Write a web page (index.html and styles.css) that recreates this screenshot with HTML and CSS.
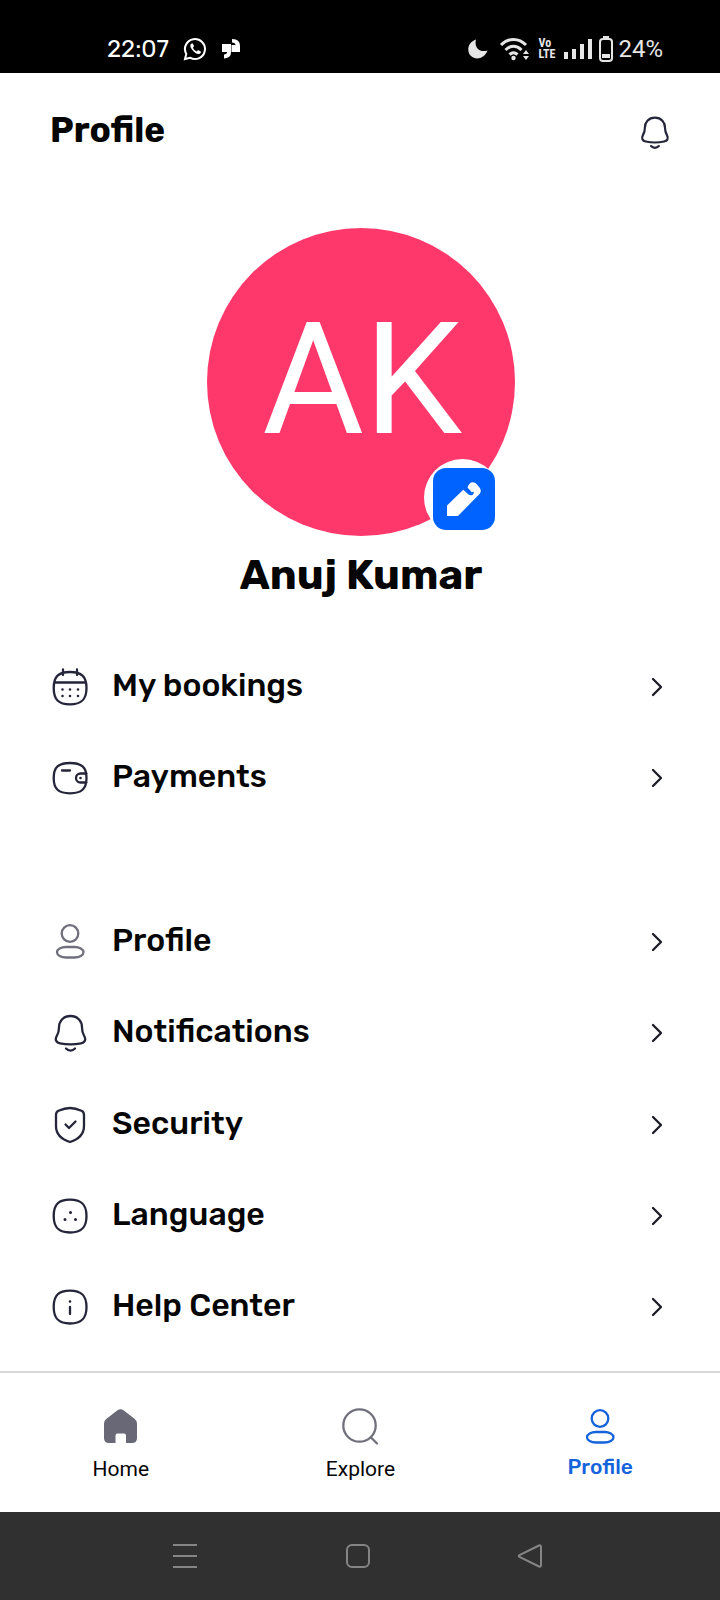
FILE: index.html
```html
<!DOCTYPE html>
<html lang="en">
<head>
<meta charset="utf-8">
<meta name="viewport" content="width=device-width, initial-scale=1">
<title>Profile</title>
<link rel="stylesheet" href="styles.css">
</head>
<body>
<svg class="defs" aria-hidden="true">
  <symbol id="chevron" viewBox="0 0 12 20"><path d="M2 2l8 8-8 8"/></symbol>
  <symbol id="person" viewBox="0 0 40 40"><circle cx="20" cy="11.500" r="8.300"/><rect x="7" y="25" width="26.500" height="10.500" rx="9" ry="5.250"/></symbol>
  <symbol id="bell" viewBox="0 0 40 40"><path d="M20.500 3C13 3 9 8.500 9 14.500c0 4-.5 5.500-2.200 8.500-2.300 4-.3 6.500 3.200 7.300 7 1.500 14 1.500 21 0 3.500-.8 5.500-3.300 3.200-7.300-1.700-3-2.200-4.500-2.200-8.500C32 8.500 28 3 20.500 3z"/><path d="M16 35.500c2.500 2.700 6.500 2.700 9 0"/></symbol>
</svg>
<div class="screen">
  <div class="status">
    <div class="status-group">
      <span class="clock">22:07</span>
      <svg class="s-wa" viewBox="0 0 24 24"><path d="M2 22l1.300-5a10 10 0 1 1 3.700 3.700z" fill="none" stroke="currentColor" stroke-width="2"/><path d="M8.500 6.500c-1.800 1-1.500 3.500.5 6s4.500 4.700 6.800 4.500c1.400-.2 2.400-1.300 2-2.600l-2.700-1.400-1.400 1.500c-1.800-.7-3-2-3.800-3.700l1.100-1.500-1.100-2.700z" fill="currentColor"/></svg>
      <svg class="s-quote" viewBox="0 0 20 22"><path d="M1 6h9v8c0 4-2 6-7 6.500v-4c2 0 3-1 3-2.500H1zM11 1c6 0 8 3 8 7v6h-8.500V7h4c0-1.500-1.500-2.500-3.500-2.500z" fill="currentColor"/></svg>
    </div>
    <div class="status-group status-right">
      <svg class="s-moon" viewBox="0 0 22 22"><path d="M9 1.500C7 9 12 15 20.500 12.500 18 20 9 23 4 18S1 4 9 1.500z" fill="currentColor"/></svg>
      <svg class="s-wifi" viewBox="0 0 32 24"><path d="M2 8c7-7.500 18-7.500 25 0M6.500 13c5-5 11-5 16 0M10.500 17.500c3-2.500 5-2.500 8 0" fill="none" stroke="currentColor" stroke-width="3"/><circle cx="14.500" cy="21" r="2.200" fill="currentColor"/><path d="M24 17l3-4 3 4zM24 19l3 4 3-4z" fill="currentColor"/></svg>
      <span class="volte"><span>Vo</span><span>LTE</span></span>
      <svg class="s-bars" viewBox="0 0 30 22"><path d="M1 14h4v7H1zM9 11h4v10H9zM17 6h4v15h-4zM25 1h4v20h-4z" fill="currentColor"/></svg>
      <svg class="s-batt" viewBox="0 0 16 28"><rect x="2" y="4" width="12" height="22" rx="3" fill="none" stroke="currentColor" stroke-width="2"/><path d="M5 1h6v2H5zM4 19h8v4H4z" fill="currentColor"/></svg>
      <span class="percent">24%</span>
    </div>
  </div>

  <header class="header">
    <h1 class="title">Profile</h1>
    <button class="plain" aria-label="Notifications"><svg class="icon bell-small"><use href="#bell"/></svg></button>
  </header>

  <main class="main">
    <section class="hero">
      <div class="avatar">
        <span class="initials">AK</span>
        <div class="edit-ring"></div>
        <button class="edit" aria-label="Edit picture"><svg viewBox="0 0 36 36"><path d="M1 35V24.500L17.500 8.500l5.500 5 3.500-1.500-5-5.500C23.500 0 28 0 31 3.500l2.500 3c2 2.500 1.500 5-.5 7L12 35z"/><path class="cut" d="M17.500 7.500l5.500 5c2 1.500 4.500.5 3.500-1.500"/></svg></button>
      </div>
      <h2 class="name">Anuj Kumar</h2>
    </section>

    <nav class="menu" aria-label="Bookings">
      <a class="row" href="#"><svg class="icon" viewBox="0 0 40 40"><path d="M3.700 21C3.700 9.500 8.500 5 20 5s16.500 4.500 16.500 16S31.500 37.300 20 37.300 3.700 32.500 3.700 21zM4.500 15.500h31.500M13 2.500v5.500M27 2.500v5.500"/><path class="dots" d="M12.500 22.500h.01M20 22.500h.01M28 22.500h.01M12.500 29h.01M20 29h.01M28 29h.01"/></svg><span class="label">My bookings</span><svg class="chevron"><use href="#chevron"/></svg></a>
      <a class="row" href="#"><svg class="icon" viewBox="0 0 40 40"><path d="M3.700 20C3.700 9 8.500 5 20 5s16.500 4 16.500 15-5 15.300-16.500 15.300S3.700 31 3.700 20zM12 12.500h8M36.500 15.500h-6a4.500 4.500 0 0 0 0 9h6"/><path class="dots" d="M30.500 20h.01"/></svg><span class="label">Payments</span><svg class="chevron"><use href="#chevron"/></svg></a>
    </nav>

    <nav class="menu settings" aria-label="Settings">
      <a class="row" href="#"><svg class="icon muted"><use href="#person"/></svg><span class="label">Profile</span><svg class="chevron"><use href="#chevron"/></svg></a>
      <a class="row" href="#"><svg class="icon"><use href="#bell"/></svg><span class="label">Notifications</span><svg class="chevron"><use href="#chevron"/></svg></a>
      <a class="row" href="#"><svg class="icon" viewBox="0 0 40 40"><path d="M20 3c3.500 0 8 1.200 11.500 2.700 2 .9 2.500 2 2.500 4.300v11c0 8-6 13.500-14 16C12 34.500 6 29 6 21V10c0-2.300.5-3.400 2.500-4.300C12 4.200 16.500 3 20 3zM15.500 19.500l3.500 3.500 6.500-6.500"/></svg><span class="label">Security</span><svg class="chevron"><use href="#chevron"/></svg></a>
      <a class="row" href="#"><svg class="icon" viewBox="0 0 40 40"><path d="M3.700 20C3.700 8.500 8.500 3.700 20 3.700S36.500 8.500 36.500 20 31.500 36.500 20 36.500 3.700 31.500 3.700 20z"/><path class="dots big" d="M20.500 16.500h.01M15 23.500h.01M25.500 23.500h.01"/></svg><span class="label">Language</span><svg class="chevron"><use href="#chevron"/></svg></a>
      <a class="row" href="#"><svg class="icon" viewBox="0 0 40 40"><path d="M3.700 20C3.700 8.500 8.500 3.700 20 3.700S36.500 8.500 36.500 20 31.500 36.500 20 36.500 3.700 31.500 3.700 20zM20 20v7"/><path class="dots" d="M20 14.500h.01"/></svg><span class="label">Help Center</span><svg class="chevron"><use href="#chevron"/></svg></a>
    </nav>
  </main>

  <nav class="tabs" aria-label="Main">
    <a class="tab" href="#"><svg class="icon muted" viewBox="0 0 40 40"><path class="solid" d="M16.500 3.200q3-2 6 0l11 8.600q2.500 1.800 2.500 5V31q0 5-5 5h-6v-7.500q0-2-2-2h-6.500q-2 0-2 2V36H8q-5 0-5-5V16.800q0-3.200 2.500-5z"/></svg><span>Home</span></a>
    <a class="tab" href="#"><svg class="icon muted" viewBox="0 0 40 40"><circle cx="19.500" cy="18.500" r="16.200"/><path d="M31 30.500l6 6"/></svg><span>Explore</span></a>
    <a class="tab active" href="#" aria-current="page"><svg class="icon"><use href="#person"/></svg><span>Profile</span></a>
  </nav>

  <div class="system">
    <button class="plain" aria-label="Recent apps"><svg viewBox="0 0 26 26"><path d="M1 2h24M1 13h24M1 24h24"/></svg></button>
    <button class="plain" aria-label="Home screen"><svg viewBox="0 0 26 26"><rect x="2" y="2" width="22" height="22" rx="5"/></svg></button>
    <button class="plain" aria-label="Back"><svg viewBox="0 0 26 26"><path d="M22 2.500L2.500 12q-1.500 1 0 2L22 23.500q2 .8 2-1.500V4q0-2.300-2-1.500z"/></svg></button>
  </div>
</div>
</body>
</html>
```
FILE: styles.css
```css
* { box-sizing: border-box; }
body {
  margin: 0;
  background: #fff;
  color: #050505;
  font-family: Rubik, Inter, "Liberation Sans", sans-serif;
}
a { color: inherit; text-decoration: none; }
svg { display: block; flex: none; }
.defs { position: absolute; width: 0; height: 0; }
.plain { padding: 0; border: 0; background: none; color: inherit; }
.screen { display: flex; flex-direction: column; min-height: 100vh; }

.status {
  display: flex;
  justify-content: space-between;
  align-items: center;
  height: 73px;
  padding: 24px 57px 0 107px;
  background: #000;
  color: #e6e6e6;
  font-family: Roboto, sans-serif;
  font-size: 24px;
}
.status-group { display: flex; align-items: center; gap: 14px; }
.status-right { gap: 8px; }
.clock { color: #fff; font-family: Rubik, Inter, sans-serif; font-size: 24px; }
.s-wa { width: 24px; height: 24px; color: #fff; }
.s-quote { width: 20px; height: 22px; color: #fff; }
.s-moon { width: 22px; height: 22px; }
.s-wifi { width: 32px; height: 24px; margin-left: 2px; }
.s-bars { width: 30px; height: 22px; }
.s-batt { width: 16px; height: 28px; margin-left: -3px; }
.status-right .percent { margin-left: -4px; }
.volte {
  display: flex;
  flex-direction: column;
  font-family: "Roboto Condensed", Roboto, sans-serif;
  font-size: 12px;
  line-height: 11px;
  font-weight: 700;
}

.header {
  display: flex;
  justify-content: space-between;
  align-items: center;
  height: 119px;
  padding: 0 48px 0 50px;
}
.title { margin: 0; padding-bottom: 5px; font-size: 35px; font-weight: 700; line-height: 40px; }

.icon {
  width: 40px;
  height: 40px;
  fill: none;
  stroke: #25253a;
  stroke-width: 2.300;
  stroke-linecap: round;
  stroke-linejoin: round;
}
.bell-small { width: 35px; height: 35px; stroke-width: 2.500; }
.dots { stroke-width: 2.600; }
.big { stroke-width: 3; }
.muted { stroke: #70707d; }
.solid { fill: #686877; stroke: none; }

.main { display: flex; flex: 1; flex-direction: column; padding-bottom: 18px; }
.hero {
  display: flex;
  flex-direction: column;
  align-items: center;
  padding: 36px 0 0 2px;
  margin-bottom: 41px;
}
.avatar {
  position: relative;
  display: flex;
  align-items: center;
  justify-content: center;
  width: 308px;
  height: 308px;
  border-radius: 50%;
  background: #ff386c;
  color: #fff;
  font-family: Roboto, sans-serif;
  font-size: 156px;
  line-height: 1;
}
.initials { padding: 0 0 4px 2px; }
.edit-ring {
  position: absolute;
  right: 14px;
  bottom: 0;
  width: 77px;
  height: 77px;
  border-radius: 50%;
  background: #fff;
}
.edit {
  position: absolute;
  right: 20px;
  bottom: 6px;
  display: grid;
  place-items: center;
  width: 62px;
  height: 62px;
  padding: 0;
  border: 0;
  border-radius: 13px;
  background: #0062ff;
}
.edit svg { width: 36px; height: 36px; fill: #fff; }
.edit .cut { fill: none; stroke: #0062ff; stroke-width: 2; }
.name { margin: 14px 0 0; font-size: 42px; font-weight: 700; line-height: 50px; }

.menu { display: flex; flex-direction: column; }
.settings { flex: 1; margin-top: 73px; }
.row {
  display: flex;
  flex: 1 0 auto;
  align-items: center;
  gap: 22px;
  min-height: 91px;
  padding: 0 57px 0 50px;
}
.label { flex: 1; padding-bottom: 4px; font-size: 32px; font-weight: 500; line-height: 40px; }
.chevron {
  width: 12px;
  height: 20px;
  fill: none;
  stroke: #1c1c28;
  stroke-width: 2.300;
  stroke-linecap: round;
  stroke-linejoin: round;
}

.tabs {
  display: grid;
  grid-template-columns: repeat(3, 1fr);
  height: 141px;
  padding: 34px 0 0 1px;
  border-top: 2px solid #d9d9d9;
}
.tab {
  display: flex;
  flex-direction: column;
  align-items: center;
  gap: 10px;
  font-family: Roboto, sans-serif;
  font-size: 21px;
  line-height: 24px;
}
.active { gap: 8px; color: #1463dc; font-family: Rubik, Inter, sans-serif; font-weight: 500; }
.active .icon { stroke: #1463dc; }

.system {
  display: flex;
  justify-content: space-between;
  align-items: center;
  height: 88px;
  padding: 0 177px 0 172px;
  background: #303030;
}
.system svg { width: 26px; height: 26px; fill: none; stroke: #858585; stroke-width: 2; }
```
